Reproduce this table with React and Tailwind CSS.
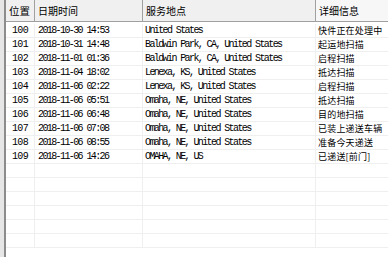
import React from 'react';

const rows = [
  ['100', '2018-10-30 14:53', 'United States', '快件正在处理中'],
  ['101', '2018-10-31 14:48', 'Baldwin Park, CA, United States', '起运地扫描'],
  ['102', '2018-11-01 01:36', 'Baldwin Park, CA, United States', '启程扫描'],
  ['103', '2018-11-04 18:02', 'Lenexa, KS, United States', '抵达扫描'],
  ['104', '2018-11-06 02:22', 'Lenexa, KS, United States', '启程扫描'],
  ['105', '2018-11-06 05:51', 'Omaha, NE, United States', '抵达扫描'],
  ['106', '2018-11-06 06:48', 'Omaha, NE, United States', '目的地扫描'],
  ['107', '2018-11-06 07:08', 'Omaha, NE, United States', '已装上递送车辆'],
  ['108', '2018-11-06 08:55', 'Omaha, NE, United States', '准备今天递送'],
  ['109', '2018-11-06 14:26', 'OMAHA, NE, US', '已递送[前门]'],
];

const emptyRows = Array.from({ length: 6 });

const mono = "font-['Liberation_Mono',monospace] text-[10px]";
const cjk = "font-['Noto_Sans_CJK_SC','Noto_Sans',sans-serif]";

const Row = ({ cells }) => (
  <div className="flex h-[14px] border-b border-[#efefef] leading-[13px] text-black">
    <div className={`w-[29px] shrink-0 border-r border-[#efefef] text-center tracking-[-0.6px] ${mono}`}>{cells[0]}</div>
    <div className={`w-[108px] shrink-0 border-r border-[#efefef] pl-[3px] tracking-[-1.6px] ${mono}`}>{cells[1]}</div>
    <div className={`w-[173px] shrink-0 border-r border-[#efefef] pl-[2px] tracking-[-1.6px] ${mono}`}>{cells[2]}</div>
    <div className={`flex-1 whitespace-nowrap pl-[2px] text-[9px] tracking-[0.2px] ${cjk}`}>{cells[3]}</div>
  </div>
);

export default function App() {
  return (
    <div className="flex h-[257px] w-[388px] overflow-hidden bg-white">
      <div className="w-[4px] shrink-0 bg-[#e6e6e6]" />
      <div className="w-[2px] shrink-0 bg-[#8c8c8c]" />
      <div className="flex-1 overflow-hidden">
        {/* header */}
        <div className={`flex h-[22px] border-b border-[#a0a0a0] bg-[#f0f0f0] text-[10px] leading-[21px] text-black ${cjk}`}>
          <div className="w-[29px] shrink-0 border-r border-[#a0a0a0] pl-[3px] text-[10.5px]">位置</div>
          <div className="w-[108px] shrink-0 border-r border-[#a0a0a0] pl-[3px]">日期时间</div>
          <div className="w-[173px] shrink-0 border-r border-[#a0a0a0] pl-[3px]">服务地点</div>
          <div className="flex-1 bg-[#f7f7f7] pl-[3px]">详细信息</div>
        </div>
        <div className="pt-[2px]">
          {rows.map((r) => (
            <Row key={r[0]} cells={r} />
          ))}
          {emptyRows.map((_, i) => (
            <Row key={i} cells={['', '', '', '']} />
          ))}
        </div>
      </div>
    </div>
  );
}
